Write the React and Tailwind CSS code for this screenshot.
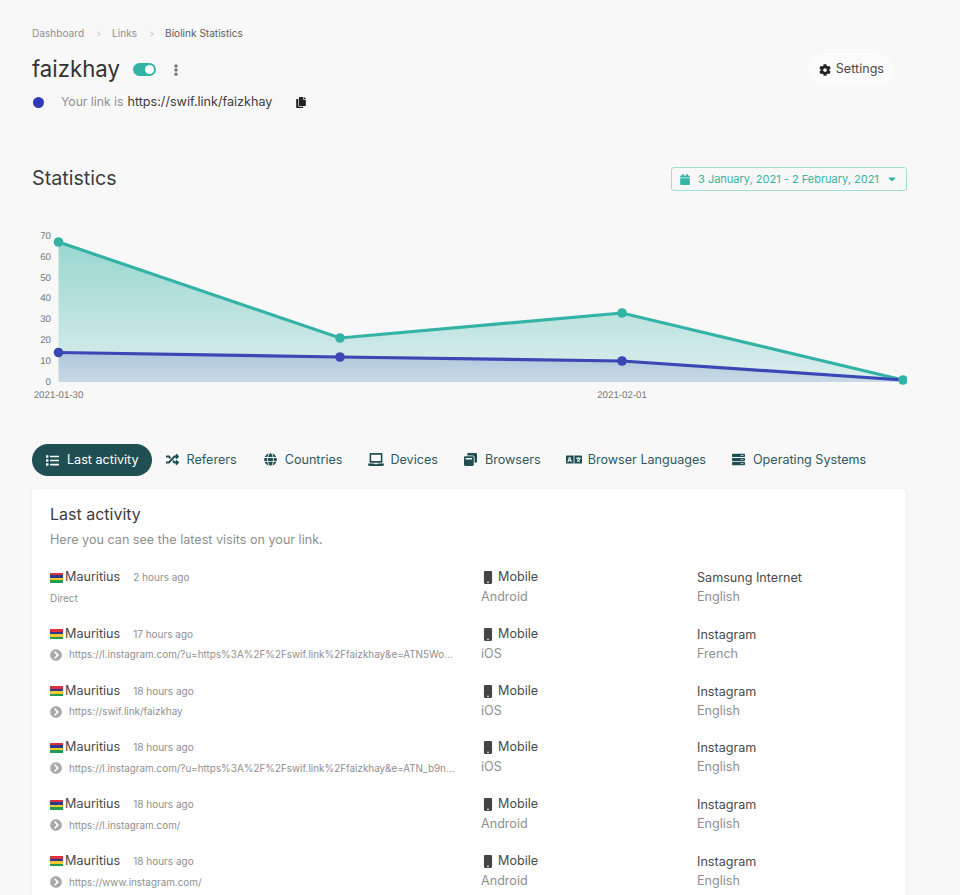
import {
  FaCog,
  FaCalendar,
  FaCaretDown,
  FaList,
  FaRandom,
  FaGlobe,
  FaLaptop,
  FaWindowRestore,
  FaLanguage,
  FaServer,
  FaMobile,
  FaCopy,
  FaEllipsisV,
  FaChevronCircleRight,
  FaChevronRight,
} from "react-icons/fa";

const tabs = [
  { name: "Referers", icon: FaRandom, iconClass: "w-[13px] mr-[8px]", itemClass: "mr-[13px]" },
  { name: "Countries", icon: FaGlobe, iconClass: "w-[13px] mr-[8px]", itemClass: "mr-[12px]" },
  { name: "Devices", icon: FaLaptop, iconClass: "w-[16px] mr-[6px]", itemClass: "mr-[12px]" },
  { name: "Browsers", icon: FaWindowRestore, iconClass: "w-[13px] mr-[8px]", itemClass: "mr-[11px]" },
  { name: "Browser Languages", icon: FaLanguage, iconClass: "w-[16px] mr-[6px]", itemClass: "mr-[12px]" },
  { name: "Operating Systems", icon: FaServer, iconClass: "w-[13px] mr-[8px]", itemClass: "mr-[13px]" },
];

const visits = [
  { time: "2 hours ago", ref: null, os: "Android", browser: "Samsung Internet", lang: "English" },
  { time: "17 hours ago", ref: "https://l.instagram.com/?u=https%3A%2F%2Fswif.link%2Ffaizkhay&e=ATN5Wo…", os: "iOS", browser: "Instagram", lang: "French" },
  { time: "18 hours ago", ref: "https://swif.link/faizkhay", os: "iOS", browser: "Instagram", lang: "English" },
  { time: "18 hours ago", ref: "https://l.instagram.com/?u=https%3A%2F%2Fswif.link%2Ffaizkhay&e=ATN_b9n…", os: "iOS", browser: "Instagram", lang: "English" },
  { time: "18 hours ago", ref: "https://l.instagram.com/", os: "Android", browser: "Instagram", lang: "English" },
  { time: "18 hours ago", ref: "https://www.instagram.com/", os: "Android", browser: "Instagram", lang: "English" },
];

const teal = [[58.5, 242], [340, 338], [622, 313], [903, 380]];
const blue = [[58.5, 352.5], [340, 357], [622, 361], [903, 380]];
const toPoints = (pts) => pts.map((p) => p.join(",")).join(" ");

const Chart = () => (
  <svg viewBox="32 225 875 180" className="block w-[875px] h-[180px] mt-[33px]">
    <defs>
      <linearGradient id="tealFill" x1="0" y1="235" x2="0" y2="382" gradientUnits="userSpaceOnUse">
        <stop offset="0" stopColor="#33b3a6" stopOpacity="0.5" />
        <stop offset="1" stopColor="#33b3a6" stopOpacity="0.14" />
      </linearGradient>
      <linearGradient id="blueFill" x1="0" y1="345" x2="0" y2="382" gradientUnits="userSpaceOnUse">
        <stop offset="0" stopColor="#3a47b5" stopOpacity="0.24" />
        <stop offset="1" stopColor="#3a47b5" stopOpacity="0.12" />
      </linearGradient>
    </defs>
    <polygon points={`58.5,382 ${toPoints(teal)} 903,382`} fill="url(#tealFill)" />
    <polygon points={`58.5,382 ${toPoints(blue)} 903,382`} fill="url(#blueFill)" />
    <polyline points={toPoints(teal)} fill="none" stroke="#33b3a6" strokeWidth="3.2" />
    <polyline points={toPoints(blue)} fill="none" stroke="#3a47b5" strokeWidth="3.2" />
    {teal.map(([x, y]) => (
      <circle key={x} cx={x} cy={y} r="4.8" fill="#33b3a6" />
    ))}
    {blue.slice(0, 3).map(([x, y]) => (
      <circle key={x} cx={x} cy={y} r="4.8" fill="#3a47b5" />
    ))}
    <g fontFamily="'Liberation Sans', Arial, sans-serif" fontSize="9.7" fill="#777777" textRendering="geometricPrecision">
      {[0, 10, 20, 30, 40, 50, 60, 70].map((v) => (
        <text key={v} x="51" y={384.5 - v * 2.08} textAnchor="end">
          {v}
        </text>
      ))}
      <text x="58.5" y="398" textAnchor="middle">2021-01-30</text>
      <text x="622" y="398" textAnchor="middle">2021-02-01</text>
    </g>
  </svg>
);

const Flag = () => (
  <span className="flex flex-col w-[13px] h-[10px] mr-[2px]">
    <span className="flex-1 bg-[#dc2f3f]" />
    <span className="flex-1 bg-[#2b3a8f]" />
    <span className="flex-1 bg-[#f7c72e]" />
    <span className="flex-1 bg-[#1f9e50]" />
  </span>
);

const VisitRow = ({ visit }) => (
  <div className="grid grid-cols-[431px_216px_1fr] h-[56.8px]">
    <div className="min-w-0">
      <div className="flex items-center h-[21px] text-[12.6px] text-[#4a4a4a]">
        <Flag />
        <span>Mauritius</span>
        <span className="ml-[13px] text-[10px] text-[#8f8f8f]">{visit.time}</span>
      </div>
      <div className="flex items-center h-[20px] text-[9.9px] text-[#8f8f8f]">
        {visit.ref ? (
          <>
            <FaChevronCircleRight className="shrink-0 w-[12px] h-[12px] mr-[7px] text-[#a8a8a8]" />
            <span className="whitespace-nowrap">{visit.ref}</span>
          </>
        ) : (
          <span>Direct</span>
        )}
      </div>
    </div>
    <div>
      <div className="flex items-center h-[21px] text-[12.6px] text-[#4a4a4a]">
        <FaMobile className="w-[14px] h-[13px] mr-[3px] text-[#444444]" />
        Mobile
      </div>
      <div className="-mt-[1px] h-[19px] leading-[19px] text-[12.6px] text-[#8f8f8f]">{visit.os}</div>
    </div>
    <div>
      <div className="h-[21px] leading-[21px] text-[12.6px] text-[#4a4a4a]">{visit.browser}</div>
      <div className="-mt-[1px] h-[19px] leading-[19px] text-[12.6px] text-[#8f8f8f]">{visit.lang}</div>
    </div>
  </div>
);

const App = () => (
  <div className="h-[895px] overflow-hidden bg-[#f8f8f8] px-8 font-['Inter',sans-serif]">
    <div className="w-[875px]">
      {/* Breadcrumb */}
      <nav className="flex items-center pt-[26px] h-[41px] text-[10.1px] text-[#8f8f8f]">
        <span>Dashboard</span>
        <FaChevronRight className="w-[6px] h-[6px] ml-[12px] mr-[10px] text-[#c8c8c8]" />
        <span>Links</span>
        <FaChevronRight className="w-[6px] h-[6px] ml-[12px] mr-[10px] text-[#c8c8c8]" />
        <span className="text-[#5c5c5c]">Biolink Statistics</span>
      </nav>

      {/* Title row */}
      <div className="flex items-center justify-between mt-[10px] h-[36px]">
        <div className="flex items-center">
          <h1 className="text-[22.2px] leading-none text-[#333333]">faizkhay</h1>
          <span className="flex items-center justify-end mt-[2px] ml-[13px] w-[23px] h-[13px] pr-[2px] rounded-full bg-[#33b3a6]">
            <span className="w-[9px] h-[9px] rounded-full bg-white" />
          </span>
          <FaEllipsisV className="mt-[2px] ml-[15px] w-[10px] h-[12px] text-[#777777]" />
        </div>
        <div className="flex items-center h-[32px] pt-[1px] mr-[14px] pl-[11px] pr-[9px] rounded-full bg-[#fbfbfb] text-[12.6px] text-[#4a4a4a]">
          <FaCog className="w-[12px] h-[12px] mr-[5px] text-[#222222]" />
          Settings
        </div>
      </div>

      {/* Link row */}
      <div className="flex items-center mt-[5px] h-[20px] text-[12.6px]">
        <span className="w-[11px] h-[11px] ml-[1px] rounded-full bg-[#3338b5]" />
        <span className="ml-[17px] text-[12.2px] text-[#8f8f8f]">Your link is</span>
        <span className="ml-[4px] text-[#3d3d3d]">https://swif.link/faizkhay</span>
        <FaCopy className="ml-[24px] w-[10px] h-[11px] text-[#222222]" />
      </div>

      {/* Statistics header */}
      <div className="flex items-center justify-between mt-[54px] h-[26px]">
        <h2 className="text-[19.7px] text-[#3d3d3d]">Statistics</h2>
        <div className="flex items-center w-[236px] h-[24px] pl-[8px] pr-[9px] rounded-[3px] border border-[#a0dfd6] text-[11px] text-[#33b3a6]">
          <FaCalendar className="w-[10px] h-[11px] mr-[8px]" />
          <span>3 January, 2021 - 2 February, 2021</span>
          <FaCaretDown className="ml-auto w-[10px] h-[12px] text-[#33b3a6]" />
        </div>
      </div>

      <Chart />

      {/* Tabs */}
      <div className="flex items-center mt-[39px] h-[32px] text-[12.6px] text-[#2f5a5e]">
        <div className="flex items-center h-[32px] pl-[14px] pr-[13px] rounded-full bg-[#1f4f53] text-white">
          <FaList className="w-[13px] h-[13px] mr-[8px]" />
          Last activity
        </div>
        {tabs.map(({ name, icon: Icon, iconClass, itemClass }) => (
          <div key={name} className={`flex items-center ml-[14px] ${itemClass}`}>
            <Icon className={`${iconClass} h-[13px] text-[#1f4f53]`} />
            {name}
          </div>
        ))}
      </div>

      {/* Last activity card */}
      <div className="mt-[13px] w-[874px] rounded-[4px] bg-white px-[18px] pt-[14px] shadow-[0_0_2px_rgba(0,0,0,0.1)]">
        <h3 className="text-[16px] leading-[22px] text-[#3d3d3d]">Last activity</h3>
        <p className="mt-[5px] text-[12.6px] leading-[20px] text-[#8f8f8f]">Here you can see the latest visits on your link.</p>
        <div className="mt-[17px]">
          {visits.map((visit, i) => (
            <VisitRow key={i} visit={visit} />
          ))}
        </div>
      </div>
    </div>
  </div>
);

export default App;
